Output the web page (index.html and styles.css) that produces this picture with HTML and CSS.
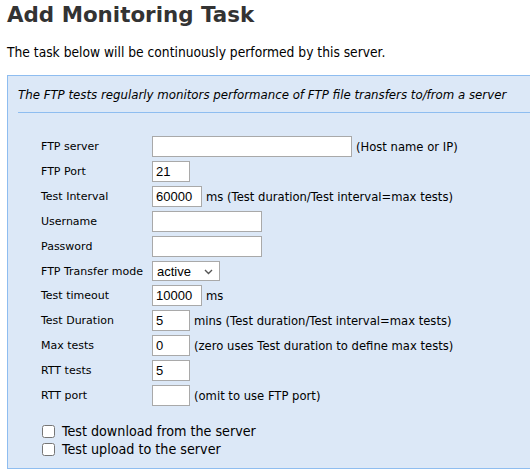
FILE: index.html
```html
<!DOCTYPE html>
<html lang="en">
<head>
    <meta charset="UTF-8">
    <meta name="viewport" content="width=device-width, initial-scale=1.0">
    <title>Add Monitoring Task</title>
    <link rel="stylesheet" href="styles.css">
</head>
<body>
    <div class="page">
        <h1>Add Monitoring Task</h1>
        <p class="intro">The task below will be continuously performed by this server.</p>

        <div class="task-box">
            <p class="task-desc">The FTP tests regularly monitors performance of FTP file transfers to/from a server</p>

            <form class="task-form">
                <div class="field-grid">
                    <label for="server">FTP server</label>
                    <div class="field"><input type="text" id="server" class="w-xl"><span>(Host name or IP)</span></div>

                    <label for="port">FTP Port</label>
                    <div class="field"><input type="text" id="port" class="w-sm" value="21"></div>

                    <label for="interval">Test Interval</label>
                    <div class="field"><input type="text" id="interval" class="w-md" value="60000"><span>ms (Test duration/Test interval=max tests)</span></div>

                    <label for="username">Username</label>
                    <div class="field"><input type="text" id="username" class="w-lg"></div>

                    <label for="password">Password</label>
                    <div class="field"><input type="password" id="password" class="w-lg"></div>

                    <label for="mode">FTP Transfer mode</label>
                    <div class="field">
                        <span class="select-wrap">
                            <select id="mode">
                                <option>active</option>
                                <option>passive</option>
                            </select>
                            <svg class="select-arrow" width="9" height="6" viewBox="0 0 9 6"><path d="M1 1l3.5 3.5L8 1" fill="none" stroke="#555" stroke-width="1.4"/></svg>
                        </span>
                    </div>

                    <label for="timeout">Test timeout</label>
                    <div class="field"><input type="text" id="timeout" class="w-md" value="10000"><span>ms</span></div>

                    <label for="duration">Test Duration</label>
                    <div class="field"><input type="text" id="duration" class="w-sm" value="5"><span>mins (Test duration/Test interval=max tests)</span></div>

                    <label for="maxtests">Max tests</label>
                    <div class="field"><input type="text" id="maxtests" class="w-sm" value="0"><span>(zero uses Test duration to define max tests)</span></div>

                    <label for="rtttests">RTT tests</label>
                    <div class="field"><input type="text" id="rtttests" class="w-sm" value="5"></div>

                    <label for="rttport">RTT port</label>
                    <div class="field"><input type="text" id="rttport" class="w-sm"><span>(omit to use FTP port)</span></div>
                </div>

                <div class="checks">
                    <label class="check"><input type="checkbox"> Test download from the server</label>
                    <label class="check"><input type="checkbox"> Test upload to the server</label>
                </div>
            </form>
        </div>
    </div>
</body>
</html>
```

FILE: styles.css
```css
/* Base */
html, body {
    overflow: hidden;
}

body {
    margin: 0;
    font-family: "DejaVu Sans Condensed", "DejaVu Sans", sans-serif;
    font-size: 13px;
    color: #000;
    background: #fff;
}

.page {
    padding: 1px 0 0 7px;
}

h1 {
    margin: 0;
    font-family: "DejaVu Sans", sans-serif;
    font-size: 21.4px;
    line-height: 28px;
    font-weight: bold;
    color: #333;
}

.intro {
    margin: 15px 0 0;
    font-size: 13.7px;
    line-height: 16px;
}

/* Task box */
.task-box {
    margin-top: 15px;
    width: 560px;
    border: 1px solid #8ebdf0;
    background: #dce8f7;
    padding: 0 0 10px 10px;
}

.task-desc {
    margin: 0;
    padding: 11px 0 9px;
    font-size: 13.1px;
    font-style: italic;
    line-height: 16px;
    border-bottom: 1px solid #8ebdf0;
}

/* Form */
.field-grid {
    display: grid;
    grid-template-columns: 111px auto;
    row-gap: 4px;
    align-items: center;
    padding: 23px 0 0 23px;
    font-family: "DejaVu Sans", sans-serif;
    font-size: 11px;
}

.field {
    display: flex;
    align-items: center;
    gap: 4px;
}

.field span {
    font-size: 11.6px;
}

.field input, .select-wrap select {
    box-sizing: border-box;
    height: 21px;
    margin: 0;
    padding: 1px 3px;
    border: 1px solid #a9a9a9;
    border-radius: 0;
    background: #fff;
    font-family: "Liberation Sans", sans-serif;
    font-size: 13px;
    color: #000;
    outline: none;
}

.w-sm { width: 38px; }
.w-md { width: 50px; }
.w-lg { width: 110px; }
.w-xl { width: 200px; }

.select-wrap {
    position: relative;
    display: inline-block;
    height: 20px;
}

.select-wrap select {
    -webkit-appearance: none;
    appearance: none;
    width: 68px;
    height: 20px;
    padding: 0 0 0 4px;
}

.select-arrow {
    position: absolute;
    right: 7px;
    top: 8px;
    pointer-events: none;
}

/* Checkboxes */
.checks {
    display: flex;
    flex-direction: column;
    padding: 16px 0 0 24px;
    font-size: 14.2px;
}

.check {
    display: flex;
    align-items: center;
    height: 18px;
}

.check input {
    width: 13px;
    height: 13px;
    margin: 0 7px 0 0;
}
```
